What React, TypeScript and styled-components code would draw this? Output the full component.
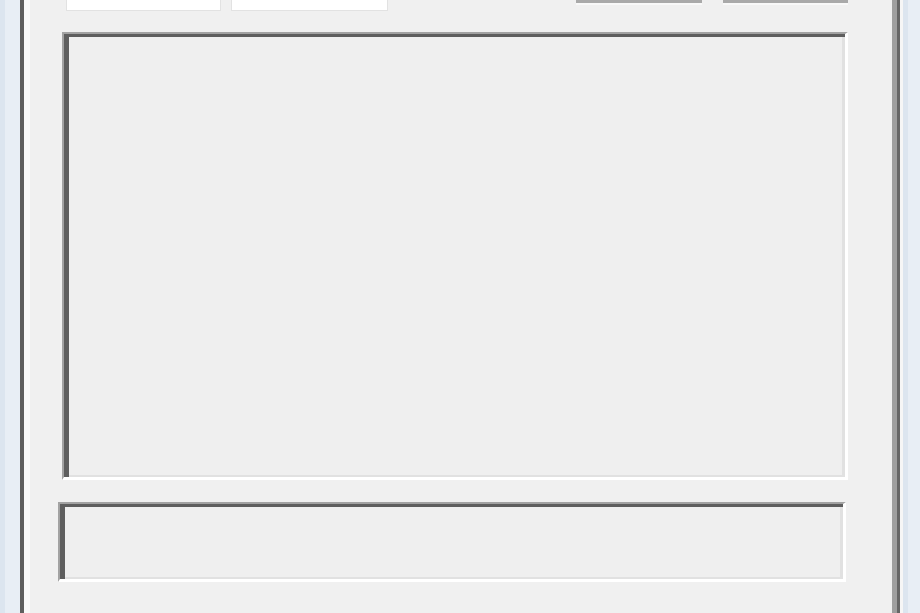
import styled, { createGlobalStyle } from "styled-components";

const GlobalStyle = createGlobalStyle`
  html, body {
    margin: 0;
    padding: 0;
    width: 920px;
    height: 613px;
    overflow: hidden;
    background: #e8eef5;
    font-family: "Liberation Sans", Arial, sans-serif;
  }
`;

const Frame = styled.div`
  display: flex;
  width: 920px;
  height: 613px;
  background: #e7edf4;
`;

const SideStrip = styled.div<{ $w: number }>`
  width: ${(p) => p.$w}px;
  flex-shrink: 0;
  background: linear-gradient(to right, #dce5ef 0 5px, #e8eef5 5px);
`;

const Window = styled.div`
  flex: 1;
  display: flex;
  border-right: 3px solid #f6f6f6;
`;

const Dialog = styled.div`
  flex: 1;
  display: flex;
  border-left: 4px solid #5f5f5f;
  border-right: 3px solid #666666;
`;

const Body = styled.div`
  flex: 1;
  display: flex;
  flex-direction: column;
  background: #f0f0f0;
  border-left: 6px solid #fafafa;
  border-right: 5px solid #9f9f9f;
`;

const TopRow = styled.div`
  display: flex;
  justify-content: space-between;
  height: 11px;
  padding: 0 44px 0 36px;
`;

const Group = styled.div<{ $gap: number }>`
  display: flex;
  gap: ${(p) => p.$gap}px;
`;

const Tab = styled.div<{ $w: number }>`
  box-sizing: border-box;
  width: ${(p) => p.$w}px;
  height: 11px;
  background: #ffffff;
  border: 1px solid #e2e2e2;
  border-top: none;
`;

const ButtonEdge = styled.div<{ $w: number }>`
  width: ${(p) => p.$w}px;
  height: 3px;
  background: #a9a9a9;
  border-bottom: 2px solid #f8f8f8;
`;

const Sunken = styled.div<{ $left: number; $w: number; $h: number; $top: number }>`
  margin: ${(p) => p.$top}px 0 0 ${(p) => p.$left}px;
  width: ${(p) => p.$w}px;
  height: ${(p) => p.$h}px;
  box-sizing: border-box;
  background: #efefef;
  border-top: 2px solid #a2a2a2;
  border-left: 2px solid #a2a2a2;
  border-right: 3px solid #ffffff;
  border-bottom: 3px solid #ffffff;
  box-shadow: inset 5px 3px 0 #5e5e5e, inset -3px -2px 0 #e1e1e1;
`;

export default function App() {
  return (
    <>
      <GlobalStyle />
      <Frame>
        <SideStrip $w={20} />
        <Window>
          <Dialog>
            <Body>
              <TopRow>
                <Group $gap={10}>
                  <Tab $w={155} />
                  <Tab $w={157} />
                </Group>
                <Group $gap={21}>
                  <ButtonEdge $w={126} />
                  <ButtonEdge $w={125} />
                </Group>
              </TopRow>
              <Sunken $top={21} $left={32} $w={786} $h={448} />
              <Sunken $top={22} $left={28} $w={788} $h={80} />
            </Body>
          </Dialog>
        </Window>
        <SideStrip $w={17} />
      </Frame>
    </>
  );
}
